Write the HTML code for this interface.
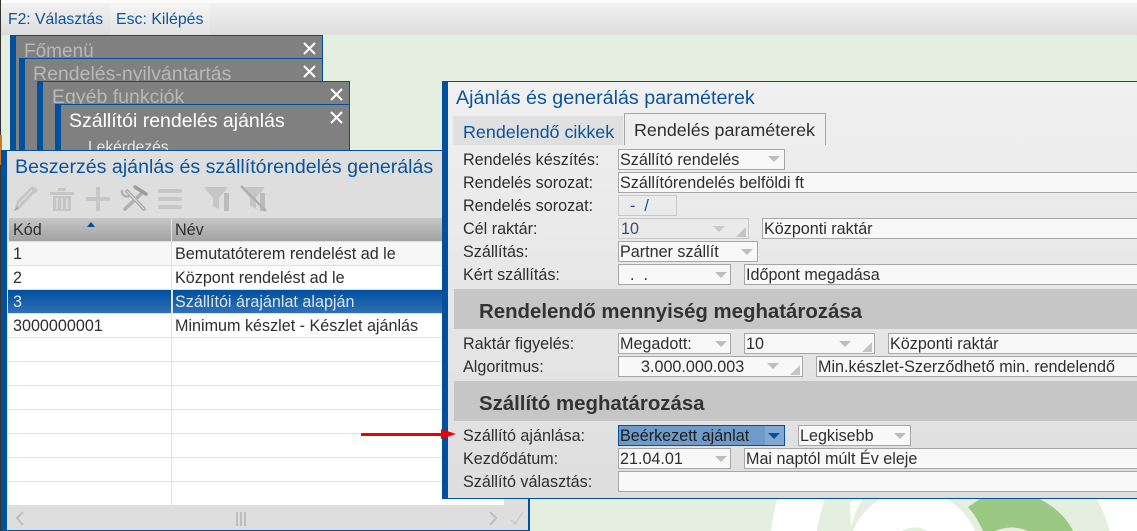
<!DOCTYPE html>
<html lang="hu"><head><meta charset="utf-8"><title>Szállítói rendelés ajánlás</title>
<style>
html,body{margin:0;padding:0;width:1137px;height:531px;overflow:hidden;background:#e4efdf}
body{font-family:"Liberation Sans",Arial,sans-serif;position:relative;font-size:16.15px;color:#2e2e2e}
div,span{position:absolute;white-space:nowrap;box-sizing:border-box}
.win{background:#808080;border-top:1px solid #00509e;border-right:1px solid #00509e;border-left:6px solid #00509e;overflow:hidden}
.wt{font-size:19.5px;color:#b8b8b8;line-height:24px}
.l{left:463px;height:20px;line-height:23px}
.f{background:#f8f8f8;border:1px solid #a6a6a6;height:21px;line-height:21px;padding-left:1px;overflow:hidden}
.d{background:transparent;border-color:#c8c8c8}
.a{width:0;height:0;border-left:6px solid transparent;border-right:6px solid transparent;border-top:6px solid #bdbdbd}
.c{width:0;height:0;border-left:10px solid transparent;border-bottom:10px solid #c4c4c4}
.sec{left:454px;width:683px;height:40px;background:#c6c6c6;font-weight:bold;font-size:20.4px;line-height:46px;padding-left:25px;color:#333}
.r{left:8px;width:496px;height:24px;border-bottom:1px solid #e0e0e0;background:#fff;line-height:25px}
.r span{top:0}
.k{left:5px}.n{left:167px}
</style></head><body>
<!-- top toolbar -->
<div style="left:0;top:0;width:1137px;height:3px;background:#fafafa"></div>
<div style="left:0;top:3px;width:1137px;height:32px;background:linear-gradient(#f2f2f2,#dddddd)"></div>
<div style="left:110px;top:3px;width:100px;height:32px;background:linear-gradient(#f5f5f5,#e2e2e2)"></div>
<div style="left:8px;top:10px;color:#0a549e;font-size:15.7px;line-height:20px">F2: Választás</div>
<div style="left:116px;top:10px;color:#0a549e;font-size:15.9px;line-height:20px">Esc: Kilépés</div>

<!-- logo -->
<svg style="position:absolute;left:0;top:0" width="1137" height="531" viewBox="0 0 1137 531">
<path d="M777 499 L825 499 Q819 515 817 531 L771 531 Q773 515 777 499Z" fill="#fff"/>
<path d="M850 503 Q851 499 863 499 Q855 510 851 527Z" fill="#fff"/>
<path d="M880 499 L947 499 Q968 513 975 531 L927 531 Q915 524 902 531 L853 531 Q860 512 880 499Z" fill="#fff"/>
<path d="M902 531 Q914 524 927 531Z" fill="#e4efdf"/>
<path d="M980 499 L1040 499 Q1064 512 1073 531 L1028 531 Q1012 524 995 531 L983 531 Q977 517 968 507Z" fill="#9bc882"/>
<path d="M1097 499 L1137 499 L1137 531 L1110 531 Q1105 514 1097 499Z" fill="#fff"/>
</svg>

<!-- stacked windows -->
<div style="left:0;top:0;width:1px;height:531px;background:#333"></div>
<div style="left:0;top:135px;width:2px;height:30px;background:#c87a30"></div>
<div class="win" style="left:10px;top:35px;width:313px;height:120px"><span class="wt" style="left:8px;top:4px;font-size:19px">Főmenü</span></div>
<div class="win" style="left:19px;top:58px;width:304px;height:100px"><span class="wt" style="left:8px;top:3px">Rendelés-nyilvántartás</span></div>
<div class="win" style="left:37px;top:81px;width:313px;height:75px"><span class="wt" style="left:9px;top:3px">Egyéb funkciók</span></div>
<div class="win" style="left:55px;top:104px;width:295px;height:50px"><span class="wt" style="left:8px;top:4px;color:#fff">Szállítói rendelés ajánlás</span><span style="left:27px;top:34px;color:#e8e8e8;font-size:15.6px">Lekérdezés</span></div>
<svg style="position:absolute;left:0;top:0" width="360" height="130">
<g stroke="#fff" stroke-width="2" fill="none">
<path d="M304 43L315 54M315 43L304 54"/>
<path d="M304 66L315 77M315 66L304 77"/>
<path d="M331 89L342 100M342 89L331 100"/>
<path d="M331 112L342 123M342 112L331 123"/>
</g></svg>

<!-- main list window -->
<div style="left:1px;top:150px;width:529px;height:381px;background:#00509e"></div>
<div style="left:7px;top:151px;width:521px;height:379px;background:#dedede"></div>
<div style="left:15px;top:155px;color:#0a549e;font-size:19.6px;line-height:24px">Beszerzés ajánlás és szállítórendelés generálás</div>

<svg style="position:absolute;left:0;top:180px" width="280" height="38" viewBox="0 180 280 38">
<g fill="#c6c6c6">
<path d="M14 211 L17 201 L31 187 Q35 186 38 190 L24 206Z"/>
<path d="M50 192h24v3H50zM58 188h8v3h-8zM53 196h18v15H53z"/>
<path d="M96 187h4v24h-4zM86 197h24v4H86z"/>
<rect x="158" y="189" width="24" height="4" rx="2"/><rect x="158" y="197" width="24" height="4" rx="2"/><rect x="158" y="205" width="24" height="4" rx="2"/>
<path d="M204 187h24l-9 11v11l-6-3v-8z"/>
<rect x="224" y="193" width="5" height="18" fill="#bcbcbc"/>
<path d="M241 187h24l-9 11v11l-6-3v-8z"/>
<rect x="260" y="193" width="5" height="18" fill="#bcbcbc"/>
</g>
<path d="M14 211L17 206L19 209Z" fill="#a8a8a8"/>
<path d="M241 186L266 211" stroke="#b0b0b0" stroke-width="2.5"/>
<path d="M18 205L32 190M22 207L35 193" stroke="#dedede" stroke-width="1.2" fill="none"/>
<path d="M57 198v11M62 198v11M67 198v11" stroke="#dedede" stroke-width="1.5"/>
<g fill="none" stroke-linecap="round">
<path d="M127 191 L144 209" stroke="#a4a4a4" stroke-width="3.5"/>
<path d="M143 192 L125 209" stroke="#b0b0b0" stroke-width="3.5"/>
<path d="M135 187 L146 194" stroke="#9c9c9c" stroke-width="3.5"/>
<path d="M122 191 a5 5 0 0 0 7 5" stroke="#b0b0b0" stroke-width="2.5"/>
<path d="M127 191 L144 209" stroke="#e4e4e4" stroke-width="1"/>
</g>
</svg>

<!-- table -->
<div style="left:9px;top:218px;width:162px;height:23px;background:linear-gradient(#c6c6c6,#a2a2a2);line-height:25px"><span style="left:4px">Kód</span></div>
<div style="left:172px;top:218px;width:270px;height:23px;background:linear-gradient(#c6c6c6,#a2a2a2);line-height:25px"><span style="left:3px">Név</span></div>
<div style="left:87px;top:222px;width:0;height:0;border-left:4px solid transparent;border-right:4px solid transparent;border-bottom:5px solid #00509e"></div>
<div class="r" style="top:242px;background:#f7f7f7"><span class="k">1</span><span class="n">Bemutatóterem rendelést ad le</span></div>
<div class="r" style="top:266px"><span class="k">2</span><span class="n">Központ rendelést ad le</span></div>
<div class="r" style="top:290px;background:linear-gradient(#00509e,#2f70b6);color:#dde6f0"><span class="k">3</span><span class="n">Szállítói árajánlat alapján</span></div>
<div class="r" style="top:314px"><span class="k">3000000001</span><span class="n">Minimum készlet - Készlet ajánlás</span></div>
<div class="r" style="top:338px"></div><div class="r" style="top:362px"></div><div class="r" style="top:386px"></div>
<div class="r" style="top:410px"></div><div class="r" style="top:434px"></div><div class="r" style="top:458px"></div>
<div class="r" style="top:482px;height:23px;border:0"></div>
<div style="left:171px;top:218px;width:1px;height:287px;background:#e0e0e0"></div>
<div style="left:171px;top:290px;width:2px;height:23px;background:#dfe6ee"></div>
<svg style="position:absolute;left:0;top:505px" width="530" height="26" viewBox="0 505 530 26">
<path d="M23 512L17 518L23 525" fill="none" stroke="#bdbdbd" stroke-width="2"/>
<path d="M237 512v14M241 512v14M245 512v14" stroke="#bdbdbd" stroke-width="2"/>
<path d="M490 512L496 518L490 525" fill="none" stroke="#bdbdbd" stroke-width="2"/>
<path d="M511 520L515 524L523 512" fill="none" stroke="#cccccc" stroke-width="1.6"/>
</svg>

<!-- params window -->
<div style="left:442px;top:81px;width:695px;height:418px;background:linear-gradient(#f0f0f0,#dedede);border-top:1px solid #00509e;border-bottom:1px solid #00509e;border-left:6px solid #00509e"></div>
<div style="left:456px;top:86px;color:#0a549e;font-size:19.7px;line-height:24px">Ajánlás és generálás paraméterek</div>
<div style="left:453px;top:116px;width:170px;height:29px;background:#e0e0e0;color:#0a549e;line-height:33px;padding-left:10px;font-size:17.9px">Rendelendő cikkek</div>
<div style="left:624px;top:113px;width:202px;height:32px;border:1px solid #a6a6a6;border-bottom:0;background:#efefef;line-height:32px;padding-left:9px;font-size:17.9px">Rendelés paraméterek</div>

<div class="l" style="top:149px">Rendelés készítés:</div>
<div class="f" style="left:618px;top:149px;width:167px">Szállító rendelés</div><div class="a" style="left:768px;top:156px"></div>
<div class="l" style="top:172px">Rendelés sorozat:</div>
<div class="f" style="left:618px;top:172px;width:530px">Szállítórendelés belföldi ft</div>
<div class="l" style="top:195px">Rendelés sorozat:</div>
<div class="f d" style="left:618px;top:195px;width:59px;padding-left:11px;color:#0a549e">-&nbsp; /</div>
<div class="l" style="top:218px">Cél raktár:</div>
<div class="f d" style="left:618px;top:218px;width:131px;padding-left:2px;color:#34506e">10</div><div class="a" style="left:713px;top:226px;border-top-color:#c8c8c8"></div><div class="c" style="left:736px;top:227px"></div>
<div class="f" style="left:762px;top:218px;width:390px">Központi raktár</div>
<div class="l" style="top:241px">Szállítás:</div>
<div class="f" style="left:618px;top:241px;width:140px">Partner szállít</div><div class="a" style="left:741px;top:249px"></div>
<div class="l" style="top:264px">Kért szállítás:</div>
<div class="f" style="left:618px;top:264px;width:113px;padding-left:11px">.&nbsp; .</div><div class="a" style="left:715px;top:272px"></div>
<div class="f" style="left:744px;top:264px;width:400px">Időpont megadása</div>

<div class="sec" style="top:289px">Rendelendő mennyiség meghatározása</div>

<div class="l" style="top:333px">Raktár figyelés:</div>
<div class="f" style="left:618px;top:333px;width:113px">Megadott:</div><div class="a" style="left:715px;top:341px"></div>
<div class="f" style="left:744px;top:333px;width:131px">10</div><div class="a" style="left:839px;top:341px"></div><div class="c" style="left:862px;top:342px"></div>
<div class="f" style="left:888px;top:333px;width:260px">Központi raktár</div>
<div class="l" style="top:356px">Algoritmus:</div>
<div class="f" style="left:618px;top:356px;width:185px;padding-left:22px">3.000.000.003</div><div class="a" style="left:767px;top:363px"></div><div class="c" style="left:790px;top:365px"></div>
<div class="f" style="left:816px;top:356px;width:330px">Min.készlet-Szerződhető min. rendelendő</div>

<div class="sec" style="top:381px">Szállító meghatározása</div>

<div class="l" style="top:425px">Szállító ajánlása:</div>
<div class="f" style="left:618px;top:425px;width:167px;background:#6f9bcb;border-color:#00509e;color:#1c1c1c">Beérkezett ajánlat</div>
<div style="left:765px;top:426px;width:19px;height:19px;background:#82a8d2"></div>
<div class="a" style="left:768px;top:433px;border-top-color:#00509e"></div>
<div class="f" style="left:798px;top:425px;width:113px">Legkisebb</div><div class="a" style="left:894px;top:433px"></div>
<div class="l" style="top:448px">Kezdődátum:</div>
<div class="f" style="left:618px;top:448px;width:113px">21.04.01</div><div class="a" style="left:715px;top:456px"></div>
<div class="f" style="left:744px;top:448px;width:400px">Mai naptól múlt Év eleje</div>
<div class="l" style="top:471px">Szállító választás:</div>
<div class="f" style="left:618px;top:471px;width:530px"></div>

<!-- red arrow -->
<div style="left:361px;top:433px;width:82px;height:3px;background:#f00000"></div>
<div style="left:441px;top:429px;width:0;height:0;border-top:5px solid transparent;border-bottom:5px solid transparent;border-left:15px solid #f00000"></div>
</body></html>
